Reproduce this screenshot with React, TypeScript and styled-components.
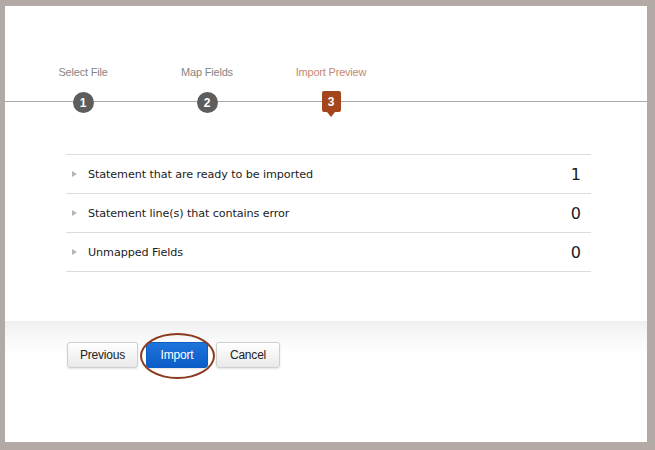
import React from 'react';
import styled, { createGlobalStyle } from 'styled-components';

const GlobalStyle = createGlobalStyle`
  html, body {
    margin: 0;
    padding: 0;
    background: #b3a9a5;
  }
  * {
    box-sizing: border-box;
  }
`;

const Frame = styled.div`
  width: 655px;
  height: 450px;
  padding: 6px 8px 8px 5px;
  background: #b3a9a5;
`;

const Panel = styled.main`
  display: flex;
  flex-direction: column;
  height: 100%;
  background: #fff;
`;

const Stepper = styled.nav`
  display: flex;
  flex-direction: column;
  gap: 12px;
  padding-top: 59px;
`;

const LabelRow = styled.div`
  display: flex;
  padding-left: 16px;
`;

const StepLabel = styled.span<{ active?: boolean }>`
  width: 124px;
  text-align: center;
  font-family: 'Liberation Sans', Arial, sans-serif;
  font-size: 11px;
  line-height: 14px;
  letter-spacing: -0.2px;
  color: ${({ active }) => (active ? '#c7876f' : '#858585')};
`;

const Track = styled.div`
  display: flex;
  height: 22px;
  padding-left: 16px;
  background: linear-gradient(
    to bottom,
    transparent 10px,
    #a9a9a9 10px,
    #a9a9a9 11px,
    transparent 11px
  );
`;

const MarkerSlot = styled.div`
  display: flex;
  justify-content: center;
  width: 124px;
`;

const Circle = styled.span`
  display: flex;
  align-items: center;
  justify-content: center;
  width: 21px;
  height: 21px;
  margin-top: 1px;
  border-radius: 50%;
  background: #5d5d5d;
  color: #fff;
  font-family: 'Liberation Sans', Arial, sans-serif;
  font-size: 12px;
  font-weight: bold;
`;

const Flag = styled.span`
  position: relative;
  display: flex;
  align-items: center;
  justify-content: center;
  width: 19px;
  height: 21px;
  border-radius: 2px;
  background: #a3461b;
  color: #fff;
  font-family: 'Liberation Sans', Arial, sans-serif;
  font-size: 12px;
  font-weight: bold;

  &::after {
    content: '';
    position: absolute;
    left: 50%;
    bottom: -5px;
    margin-left: -4px;
    border-left: 4px solid transparent;
    border-right: 4px solid transparent;
    border-top: 5px solid #a3461b;
  }
`;

const Summary = styled.section`
  width: 525px;
  margin: 41px 0 0 61px;
  border-top: 1px solid #dcdcdc;
`;

const Row = styled.div`
  display: flex;
  align-items: center;
  height: 39px;
  padding: 0 10px 0 6px;
  border-bottom: 1px solid #dcdcdc;
  font-family: 'DejaVu Sans', Verdana, sans-serif;
  color: #1c1c1c;
`;

const Caret = styled.span`
  width: 0;
  height: 0;
  margin-right: 11px;
  border-top: 3.5px solid transparent;
  border-bottom: 3.5px solid transparent;
  border-left: 5px solid #b5b5b5;
`;

const RowLabel = styled.span`
  flex: 1;
  font-size: 11.2px;
  letter-spacing: -0.1px;
`;

const RowValue = styled.span`
  font-size: 16px;
`;

const Footer = styled.footer`
  display: flex;
  gap: 8px;
  margin-top: 49px;
  padding: 21px 0 0 62px;
  flex: 1;
  background: linear-gradient(to bottom, #efefef 0px, #f7f7f7 14px, #ffffff 34px);
`;

const Button = styled.button<{ primary?: boolean; width: number }>`
  position: relative;
  width: ${({ width }) => width}px;
  height: 26px;
  padding: 0;
  border-radius: 3px;
  border: 1px solid ${({ primary }) => (primary ? '#0d5ec4' : '#cfcfcf')};
  background: ${({ primary }) =>
    primary
      ? 'linear-gradient(to bottom, #1f74dc, #0a5cc6)'
      : 'linear-gradient(to bottom, #ffffff, #e9e9e9)'};
  box-shadow: 0 1px 2px rgba(0, 0, 0, 0.12);
  color: ${({ primary }) => (primary ? '#fff' : '#222')};
  font-family: 'Liberation Sans', Arial, sans-serif;
  font-size: 12px;
  letter-spacing: -0.2px;
  cursor: pointer;
`;

const Ring = styled.span`
  position: absolute;
  left: -7px;
  top: -10px;
  width: 75px;
  height: 46px;
  border: 2px solid #8a3a1d;
  border-radius: 50%;
  pointer-events: none;
`;

const steps = ['Select File', 'Map Fields', 'Import Preview'];

const rows = [
  { label: 'Statement that are ready to be imported', value: 1 },
  { label: 'Statement line(s) that contains error', value: 0 },
  { label: 'Unmapped Fields', value: 0 },
];

const App: React.FC = () => {
  return (
    <>
      <GlobalStyle />
      <Frame>
        <Panel>
          <Stepper>
            <LabelRow>
              {steps.map((s, i) => (
                <StepLabel key={s} active={i === 2}>
                  {s}
                </StepLabel>
              ))}
            </LabelRow>
            <Track>
              {steps.map((s, i) => (
                <MarkerSlot key={s}>
                  {i === 2 ? <Flag>{i + 1}</Flag> : <Circle>{i + 1}</Circle>}
                </MarkerSlot>
              ))}
            </Track>
          </Stepper>

          <Summary>
            {rows.map((r) => (
              <Row key={r.label}>
                <Caret />
                <RowLabel>{r.label}</RowLabel>
                <RowValue>{r.value}</RowValue>
              </Row>
            ))}
          </Summary>

          <Footer>
            <div>
              <Button width={71}>Previous</Button>
            </div>
            <div>
              <Button primary width={62}>
                Import
                <Ring />
              </Button>
            </div>
            <div>
              <Button width={64}>Cancel</Button>
            </div>
          </Footer>
        </Panel>
      </Frame>
    </>
  );
};

export default App;
